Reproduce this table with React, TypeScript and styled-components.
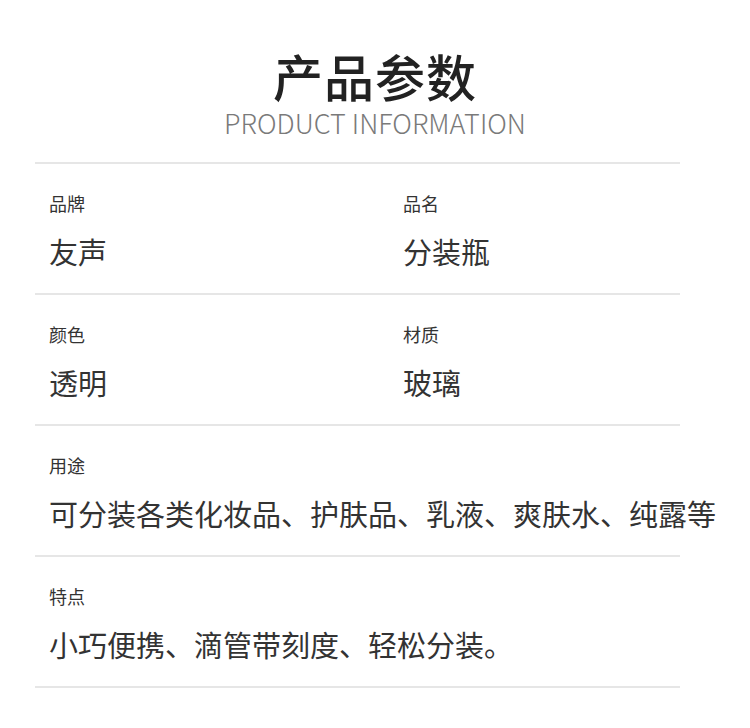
import React from 'react';
import styled, { createGlobalStyle } from 'styled-components';

const GlobalStyle = createGlobalStyle`
  body {
    margin: 0;
    background: #fff;
    font-family: "Noto Sans CJK SC", "Noto Sans", sans-serif;
  }
`;

const Page = styled.div`
  width: 750px;
  height: 728px;
  background: #fff;
  overflow: hidden;
`;

const Header = styled.header`
  display: flex;
  flex-direction: column;
  align-items: center;
  padding-top: 48px;
`;

const Title = styled.h1`
  margin: 0;
  font-size: 50px;
  line-height: 54px;
  font-weight: 500;
  color: #222;
  letter-spacing: 1px;
`;

const Subtitle = styled.div`
  margin-top: 6px;
  font-size: 27px;
  line-height: 30px;
  font-weight: 300;
  color: #7a7a7a;
`;

const Table = styled.div`
  margin: 24px 0 0 35px;
  width: 645px;
  border-bottom: 2px solid #e6e6e6;
`;

const Row = styled.div<{ $cols: number }>`
  display: grid;
  grid-template-columns: ${(p) => (p.$cols === 2 ? '354px 1fr' : '1fr')};
  border-top: 2px solid #e6e6e6;
  height: 129px;
  padding-left: 14px;
`;

const Cell = styled.div`
  display: flex;
  flex-direction: column;
  padding-top: 29px;
`;

const Label = styled.div`
  font-size: 18px;
  line-height: 20px;
  color: #333;
`;

const Value = styled.div`
  margin-top: 22px;
  font-size: 29px;
  line-height: 32px;
  color: #333;
  white-space: nowrap;
`;

type Item = { label: string; value: string };

const rows: Item[][] = [
  [
    { label: '品牌', value: '友声' },
    { label: '品名', value: '分装瓶' },
  ],
  [
    { label: '颜色', value: '透明' },
    { label: '材质', value: '玻璃' },
  ],
  [{ label: '用途', value: '可分装各类化妆品、护肤品、乳液、爽肤水、纯露等' }],
  [{ label: '特点', value: '小巧便携、滴管带刻度、轻松分装。' }],
];

export default function App() {
  return (
    <Page>
      <GlobalStyle />
      <Header>
        <Title>产品参数</Title>
        <Subtitle>PRODUCT INFORMATION</Subtitle>
      </Header>
      <Table>
        {rows.map((row, i) => (
          <Row key={i} $cols={row.length}>
            {row.map((item) => (
              <Cell key={item.label}>
                <Label>{item.label}</Label>
                <Value>{item.value}</Value>
              </Cell>
            ))}
          </Row>
        ))}
      </Table>
    </Page>
  );
}
